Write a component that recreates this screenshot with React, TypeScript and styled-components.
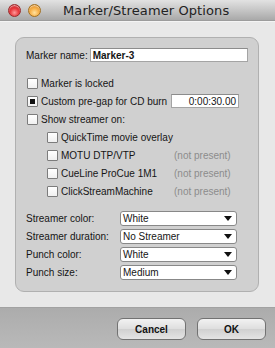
import styled, { createGlobalStyle } from "styled-components";

const GlobalStyle = createGlobalStyle`
  html, body {
    margin: 0;
    padding: 0;
    background: #e8e8e8;
  }
  * {
    box-sizing: border-box;
  }
`;

const Window = styled.div`
  width: 275px;
  height: 348px;
  display: flex;
  flex-direction: column;
  background: #e8e8e8;
  font-family: "Liberation Sans", Arial, sans-serif;
  font-size: 10px;
  color: #151515;
  overflow: hidden;
`;

const TitleBar = styled.div`
  height: 21px;
  flex: none;
  display: flex;
  align-items: center;
  padding-left: 8px;
  background: linear-gradient(#e2e2e2, #c6c6c6 50%, #a9a9a9);
  border-bottom: 1px solid #9c9c9c;
`;

const Light = styled.div<{ color: "red" | "orange" }>`
  width: 13px;
  height: 13px;
  border-radius: 50%;
  margin-right: 7px;
  border: 1px solid ${(p) => (p.color === "red" ? "#9a2a2a" : "#a3701f")};
  background: ${(p) =>
    p.color === "red"
      ? "radial-gradient(circle at 50% 70%, #ff9a9a 0%, #e8393d 45%, #b51a1e 100%)"
      : "radial-gradient(circle at 50% 70%, #ffe2a0 0%, #f7b14a 45%, #d07a12 100%)"};
  box-shadow: inset 0 1px 1px rgba(255, 255, 255, 0.6);
`;

const Title = styled.div`
  margin-left: 15px;
  font-family: "DejaVu Sans", sans-serif;
  font-size: 13px;
  color: #222;
  letter-spacing: 0.1px;
`;

const Content = styled.div`
  flex: 1;
  padding: 15px 16px 0 15px;
  border-top: 1px solid #f4f4f4;
`;

const Panel = styled.div`
  border: 1px solid #b0b0b0;
  border-radius: 9px;
  background: #d0d0d0;
  padding: 10px 10px 11px 10px;
  display: flex;
  flex-direction: column;
`;

const NameRow = styled.div`
  display: flex;
  align-items: center;
  height: 14px;
  margin-bottom: 12px;
`;

const NameLabel = styled.span`
  width: 64px;
`;

const TextField = styled.div<{ width: number; align?: "left" | "right" }>`
  width: ${(p) => p.width}px;
  height: 14px;
  background: #fff;
  border: 1px solid #a4a4a4;
  border-top-color: #8c8c8c;
  display: flex;
  align-items: center;
  justify-content: ${(p) => (p.align === "right" ? "flex-end" : "flex-start")};
  padding: 0 2px 0 2px;
  font-weight: ${(p) => (p.align === "right" ? "normal" : "bold")};
`;

const CheckRow = styled.div<{ indent?: boolean }>`
  display: flex;
  align-items: center;
  height: 18px;
  padding-left: ${(p) => (p.indent ? 21 : 1)}px;
`;

const Box = styled.span<{ checked?: boolean }>`
  width: 11px;
  height: 11px;
  flex: none;
  border: 1px solid #7c7c7c;
  border-radius: 1px;
  background: linear-gradient(#ffffff, #f0f0f0);
  display: flex;
  align-items: center;
  justify-content: center;
  margin-right: 3px;

  &::after {
    content: "";
    display: ${(p) => (p.checked ? "block" : "none")};
    width: 5px;
    height: 5px;
    background: #111;
  }
`;

const CheckText = styled.span<{ width?: number }>`
  width: ${(p) => (p.width ? `${p.width}px` : "auto")};
  flex: none;
`;

const Muted = styled.span`
  color: #8c8c8c;
`;

const Selects = styled.div`
  margin-top: 11px;
  display: flex;
  flex-direction: column;
  gap: 3px;
`;

const SelectRow = styled.div`
  display: flex;
  align-items: center;
  height: 15px;
`;

const SelectLabel = styled.span`
  width: 94px;
`;

const Select = styled.div`
  width: 117px;
  height: 15px;
  background: #fff;
  border: 1px solid #888;
  border-radius: 3px;
  display: flex;
  align-items: center;
  justify-content: space-between;
  padding: 0 4px 0 2px;
`;

const Arrow = styled.span`
  width: 0;
  height: 0;
  border-left: 4px solid transparent;
  border-right: 4px solid transparent;
  border-top: 5px solid #111;
`;

const BottomBar = styled.div`
  height: 41px;
  flex: none;
  background: linear-gradient(#acacac, #b9b9b9);
  border-top: 1px solid #a2a2a2;
  display: flex;
  justify-content: flex-end;
  gap: 11px;
  padding: 10px 9px 0 0;
`;

const Button = styled.div`
  width: 69px;
  height: 22px;
  border: 1px solid #727272;
  border-radius: 6px;
  background: linear-gradient(#f2f2f2, #dedede 50%, #d0d0d0 51%, #e4e4e4);
  display: flex;
  align-items: center;
  justify-content: center;
  font-weight: bold;
  font-size: 10px;
  color: #111;
`;

const streamers = [
  { name: "QuickTime movie overlay", present: true },
  { name: "MOTU DTP/VTP", present: false },
  { name: "CueLine ProCue 1M1", present: false },
  { name: "ClickStreamMachine", present: false },
];

const selects = [
  { label: "Streamer color:", value: "White" },
  { label: "Streamer duration:", value: "No Streamer" },
  { label: "Punch color:", value: "White" },
  { label: "Punch size:", value: "Medium" },
];

export default function App() {
  return (
    <>
      <GlobalStyle />
      <Window>
        <TitleBar>
          <Light color="red" />
          <Light color="orange" />
          <Title>Marker/Streamer Options</Title>
        </TitleBar>
        <Content>
          <Panel>
            <NameRow>
              <NameLabel>Marker name:</NameLabel>
              <TextField width={159}>Marker-3</TextField>
            </NameRow>
            <CheckRow>
              <Box />
              <CheckText>Marker is locked</CheckText>
            </CheckRow>
            <CheckRow>
              <Box checked />
              <CheckText width={130}>Custom pre-gap for CD burn</CheckText>
              <TextField width={68} align="right">
                0:00:30.00
              </TextField>
            </CheckRow>
            <CheckRow>
              <Box />
              <CheckText>Show streamer on:</CheckText>
            </CheckRow>
            {streamers.map((s) => (
              <CheckRow indent key={s.name}>
                <Box />
                <CheckText width={s.present ? undefined : 113}>{s.name}</CheckText>
                {!s.present && <Muted>(not present)</Muted>}
              </CheckRow>
            ))}
            <Selects>
              {selects.map((s) => (
                <SelectRow key={s.label}>
                  <SelectLabel>{s.label}</SelectLabel>
                  <Select>
                    <span>{s.value}</span>
                    <Arrow />
                  </Select>
                </SelectRow>
              ))}
            </Selects>
          </Panel>
        </Content>
        <BottomBar>
          <Button>Cancel</Button>
          <Button>OK</Button>
        </BottomBar>
      </Window>
    </>
  );
}
